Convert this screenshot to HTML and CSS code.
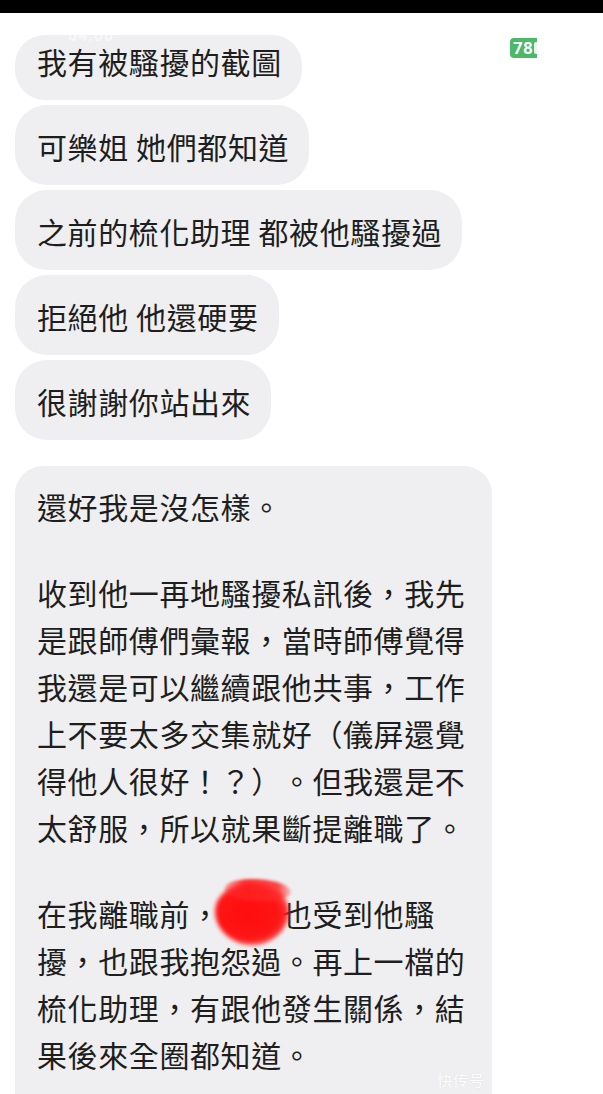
FILE: index.html
```html
<!DOCTYPE html>
<html lang="zh-Hant">
<head>
<meta charset="utf-8">
<title>訊息截圖</title>
<link rel="stylesheet" href="styles.css">
</head>
<body>
<div class="statusbar"></div>
<div class="chat">
  <div class="bubble first">我有被騷擾的截圖</div>
  <div class="bubble">可樂姐 她們都知道</div>
  <div class="bubble">之前的梳化助理 都被他騷擾過</div>
  <div class="bubble">拒絕他 他還硬要</div>
  <div class="bubble">很謝謝你站出來</div>
  <div class="big">
    <p class="para">還好我是沒怎樣。</p>
    <p class="para">收到他一再地騷擾私訊後，我先<br>是跟師傅們彙報，當時師傅覺得<br>我還是可以繼續跟他共事，工作<br>上不要太多交集就好（儀屏還覺<br>得他人很好！？）。但我還是不<br>太舒服，所以就果斷提離職了。</p>
    <p class="para">在我離職前，<span class="redacted">　　<span class="blot"></span><span class="blot streak"></span></span>也受到他騷<br>擾，也跟我抱怨過。再上一檔的<br>梳化助理，有跟他發生關係，結<br>果後來全圈都知道。</p>
  </div>
</div>
<div class="ghost-time">04:00</div>
<div class="battery"><span class="num">78</span><span class="cut"></span></div>
<div class="watermark">快传号</div>
</body>
</html>
```

FILE: styles.css
```css
html, body {
  margin: 0;
  padding: 0;
  background: #ffffff;
}
body {
  width: 603px;
  height: 1094px;
  overflow: hidden;
  position: relative;
  font-family: "Noto Sans CJK TC", "Noto Sans CJK SC", "Noto Sans", sans-serif;
  color: #1e1e1e;
  text-spacing-trim: space-all;
  font-feature-settings: "palt" 0, "halt" 0, "chws" 0;
}
.statusbar {
  height: 13px;
  background: #000;
}
.chat {
  display: flex;
  flex-direction: column;
  align-items: flex-start;
  gap: 5px;
  padding: 22px 0 0 15px;
}
.bubble {
  background: #efeff1;
  border-radius: 32px;
  padding: 3px 20px 0 22px;
  height: 80px;
  box-sizing: border-box;
  font-size: 30px;
  letter-spacing: 0.6px;
  line-height: 77px;
  white-space: nowrap;
}
.bubble.first {
  height: 65px;
  padding-top: 0;
  line-height: 52px;
  border-radius: 30px;
}
.big {
  margin-top: 21px;
  width: 477px;
  box-sizing: border-box;
  background: #efeff1;
  border-radius: 28px;
  padding: 17px 20px 60px 22px;
  font-size: 30px;
  letter-spacing: 0.6px;
  line-height: 47px;
  white-space: nowrap;
}
.para {
  margin: 0 0 39px 0;
}
.para:last-child {
  margin-bottom: 0;
}
.redacted {
  position: relative;
}
.blot {
  position: absolute;
  left: -6px;
  top: -8px;
  width: 74px;
  height: 62px;
  border-radius: 48% 52% 50% 50% / 45% 45% 55% 55%;
  background: radial-gradient(ellipse at 45% 50%, #ff0d0d 0%, #ff1515 55%, rgba(255, 40, 40, 0.85) 72%, rgba(255, 60, 60, 0) 100%);
  filter: blur(2px);
}
.blot.streak {
  left: 4px;
  top: -12px;
  width: 66px;
  height: 22px;
  border-radius: 40% 60% 40% 50%;
  background: linear-gradient(90deg, rgba(255, 60, 60, 0.4), rgba(255, 30, 30, 0.9) 30%, rgba(255, 40, 40, 0.85) 80%, rgba(255, 80, 80, 0.3));
  filter: blur(1.5px);
}
.ghost-time {
  position: absolute;
  left: 68px;
  top: 30px;
  font-family: "Roboto", "Liberation Sans", sans-serif;
  font-weight: 700;
  font-size: 16px;
  line-height: 12px;
  height: 12px;
  color: rgba(255, 255, 255, 0.5);
  letter-spacing: 1px;
}
.battery {
  position: absolute;
  left: 510px;
  top: 38px;
  height: 20px;
  display: flex;
  align-items: center;
  background: #4bb86a;
  border-radius: 4px 0 0 4px;
  color: #fff;
  font-family: "Roboto", "Liberation Sans", sans-serif;
  font-weight: 700;
  font-size: 17px;
  line-height: 20px;
  padding-left: 3px;
}
.battery .num {
  letter-spacing: 0.3px;
}
.battery .cut {
  width: 3px;
  height: 12px;
  margin-left: 1px;
  background: #e9f6ec;
  border-radius: 2px 0 0 2px;
}
.watermark {
  position: absolute;
  left: 437px;
  top: 1069px;
  font-size: 15px;
  color: rgba(255, 255, 255, 0.95);
  text-shadow: 0 0 2px rgba(0, 0, 0, 0.08);
  letter-spacing: 1px;
}
```
